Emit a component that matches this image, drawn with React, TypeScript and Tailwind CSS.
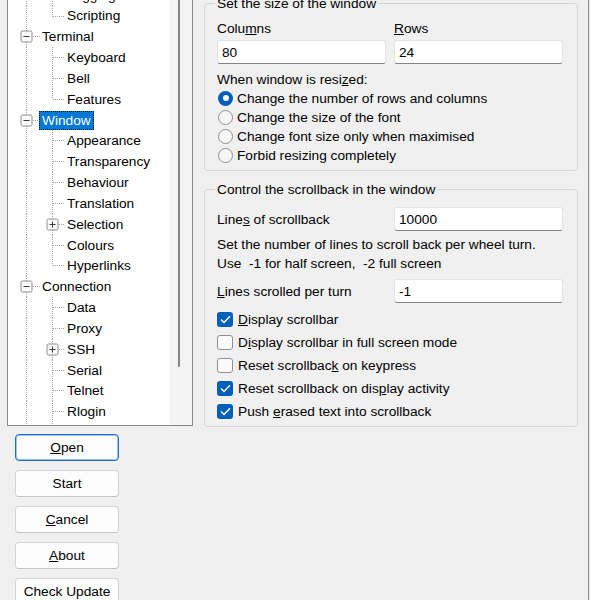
import React from 'react';

type TreeRow = {
  label: string;
  level: 0 | 1;
  box?: '+' | '-';
  v1?: 'full' | 'top';
  selected?: boolean;
};

const rows: TreeRow[] = [
  { label: 'Logging', level: 1, v1: 'full' },
  { label: 'Scripting', level: 1, v1: 'top' },
  { label: 'Terminal', level: 0, box: '-' },
  { label: 'Keyboard', level: 1, v1: 'full' },
  { label: 'Bell', level: 1, v1: 'full' },
  { label: 'Features', level: 1, v1: 'top' },
  { label: 'Window', level: 0, box: '-', selected: true },
  { label: 'Appearance', level: 1, v1: 'full' },
  { label: 'Transparency', level: 1, v1: 'full' },
  { label: 'Behaviour', level: 1, v1: 'full' },
  { label: 'Translation', level: 1, v1: 'full' },
  { label: 'Selection', level: 1, v1: 'full', box: '+' },
  { label: 'Colours', level: 1, v1: 'full' },
  { label: 'Hyperlinks', level: 1, v1: 'top' },
  { label: 'Connection', level: 0, box: '-' },
  { label: 'Data', level: 1, v1: 'full' },
  { label: 'Proxy', level: 1, v1: 'full' },
  { label: 'SSH', level: 1, v1: 'full', box: '+' },
  { label: 'Serial', level: 1, v1: 'full' },
  { label: 'Telnet', level: 1, v1: 'full' },
  { label: 'Rlogin', level: 1, v1: 'full' },
];

const DOT = { stroke: '#a3a3a3', strokeWidth: 1, strokeDasharray: '1 1' };

// expander box drawn at centre cx
function Expander({ cx, sign }: { cx: number; sign: '+' | '-' }) {
  return (
    <g>
      <rect x={cx - 5.5} y={5} width={11} height={11} rx={1.5} fill="#fafafa" stroke="#8e8e8e" />
      <line x1={cx - 3} y1={10.5} x2={cx + 3} y2={10.5} stroke="#3a3a3a" />
      {sign === '+' && <line x1={cx} y1={7.5} x2={cx} y2={13.5} stroke="#3a3a3a" />}
    </g>
  );
}

function Guides({ row, last }: { row: TreeRow; last: boolean }) {
  const w = row.level === 0 ? 34 : 59;
  const h = last ? 25 : 21;
  return (
    <svg width={w} height={21} className="shrink-0 overflow-visible">
      <line x1={18.5} y1={0} x2={18.5} y2={h} {...DOT} />
      {row.level === 0 && (
        <>
          <line x1={25} y1={10.5} x2={32} y2={10.5} {...DOT} />
          {row.box && <Expander cx={18.5} sign={row.box} />}
        </>
      )}
      {row.level === 1 && (
        <>
          <line x1={44.5} y1={0} x2={44.5} y2={row.v1 === 'top' ? 10.5 : h} {...DOT} />
          <line x1={row.box ? 51 : 45} y1={10.5} x2={56} y2={10.5} {...DOT} />
          {row.box && <Expander cx={44.5} sign={row.box} />}
        </>
      )}
    </svg>
  );
}

function Tree() {
  return (
    <div className="shrink-0 ml-[7px] mt-[-16.26px] w-[186px] h-[442.26px] border border-[#8a8a8a] bg-white flex">
      <div className="w-[162px] overflow-hidden flex flex-col">
        {rows.map((r, i) => (
          <div key={r.label} className="h-[20.84px] shrink-0 flex items-center">
            <Guides row={r} last={i === rows.length - 1} />
            <span
              className={`-ml-[3px] px-[2px] h-[19px] leading-[17px] border whitespace-nowrap ${
                r.selected ? 'bg-[#0078d7] text-white border-dotted border-[#1b1b1b]' : 'border-transparent'
              }`}
            >
              {r.label}
            </span>
          </div>
        ))}
      </div>
      <div className="w-[22px] bg-[#f3f3f3]">
        <div className="ml-[8px] mt-[4px] w-[2px] h-[378px] rounded-full bg-[#858585]" />
      </div>
    </div>
  );
}

function Button({ children, primary }: { children: React.ReactNode; primary?: boolean }) {
  return (
    <div
      className={`w-[104px] h-[27px] shrink-0 rounded-[4px] bg-[#fdfdfd] flex items-center justify-center ${
        primary
          ? 'border border-[#1f6fc0] shadow-[inset_0_0_0_1px_#9cc1ea]'
          : 'border border-[#d3d3d3] border-b-[#c2c2c2]'
      }`}
    >
      {children}
    </div>
  );
}

function TextBox({ value, w = 'w-[169px]' }: { value: string; w?: string }) {
  return (
    <div className={`${w} h-[24px] bg-white border border-[#e3e3e3] border-b-[#848484] rounded-[3px] pl-[4px] flex items-center`}>
      {value}
    </div>
  );
}

function Radio({ checked, children }: { checked?: boolean; children: React.ReactNode }) {
  return (
    <div className="h-[19px] flex items-center">
      <span
        className={`ml-[1px] w-[15px] h-[15px] rounded-full flex items-center justify-center ${
          checked ? 'bg-[#005fb8]' : 'border border-[#8f8f8f] bg-[#f7f7f7]'
        }`}
      >
        {checked && <span className="w-[6px] h-[6px] rounded-full bg-white" />}
      </span>
      <span className="ml-[4px]">{children}</span>
    </div>
  );
}

function Check({ checked, children }: { checked?: boolean; children: React.ReactNode }) {
  return (
    <div className="h-[23px] flex items-center">
      <span
        className={`w-[16px] h-[15px] rounded-[3px] flex items-center justify-center ${
          checked ? 'bg-[#005fb8]' : 'border border-[#8f8f8f] bg-[#fbfbfb]'
        }`}
      >
        {checked && (
          <svg width="11" height="9" viewBox="0 0 11 9">
            <path d="M1 4.6 L4 7.5 L10 1.3" fill="none" stroke="white" strokeWidth="1.4" />
          </svg>
        )}
      </span>
      <span className="ml-[5px]">{children}</span>
    </div>
  );
}

export default function App() {
  return (
    <div className="w-[590px] h-[600px] overflow-hidden bg-[#f0f0f0] flex text-[13.7px] leading-[19px] text-black font-['Liberation_Sans',Arial,sans-serif]">
      <div className="w-[588px] flex">
        {/* left: category tree + buttons */}
        <div className="w-[204px] flex flex-col">
          <Tree />
          <div className="ml-[15px] mt-[8px] flex flex-col gap-[9px]">
            <Button primary><span><u>O</u>pen</span></Button>
            <Button>Start</Button>
            <Button><span><u>C</u>ancel</span></Button>
            <Button><span><u>A</u>bout</span></Button>
            <Button>Check Update</Button>
          </div>
        </div>

        {/* right: window settings */}
        <div className="mt-[-6.5px] flex flex-col">
          <fieldset className="w-[374px] border border-[#d6d6d6] rounded-[4px] pl-[12px] pb-[5.5px]">
            <legend className="-ml-[2px] px-[2px]">Set the size of the window</legend>
            <div className="mt-[6.5px] grid grid-cols-[169px_169px] gap-x-[8px]">
              <div>Colu<u>m</u>ns</div>
              <div><u>R</u>ows</div>
              <div className="mt-[2px]"><TextBox value="80" /></div>
              <div className="mt-[2px]"><TextBox value="24" /></div>
            </div>
            <div className="mt-[5.5px]">When window is resi<u>z</u>ed:</div>
            <Radio checked>Change the number of rows and columns</Radio>
            <Radio>Change the size of the font</Radio>
            <Radio>Change font size only when maximised</Radio>
            <Radio>Forbid resizing completely</Radio>
          </fieldset>

          <fieldset className="mt-[9px] w-[374px] border border-[#d6d6d6] rounded-[4px] pl-[12px] pb-[3.5px]">
            <legend className="-ml-[2px] px-[2px]">Control the scrollback in the window</legend>
            <div className="mt-[8px] flex items-center">
              <div className="w-[177px]">Line<u>s</u> of scrollback</div>
              <TextBox value="10000" />
            </div>
            <div className="mt-[3.5px] whitespace-pre">
              <div>Set the number of lines to scroll back per wheel turn.</div>
              <div>Use  -1 for half screen,  -2 full screen</div>
            </div>
            <div className="mt-[6.5px] flex items-center">
              <div className="w-[177px]"><u>L</u>ines scrolled per turn</div>
              <TextBox value="-1" />
            </div>
            <div className="mt-[4.5px]">
              <Check checked><u>D</u>isplay scrollbar</Check>
              <Check>D<u>i</u>splay scrollbar in full screen mode</Check>
              <Check>Reset scrollbac<u>k</u> on keypress</Check>
              <Check checked>Reset scrollback on dis<u>p</u>lay activity</Check>
              <Check checked>Push <u>e</u>rased text into scrollback</Check>
            </div>
          </fieldset>
        </div>
      </div>
      <div className="w-[1px] bg-[#8e8e8e]" />
      <div className="w-[1px] bg-[#e4e4e4]" />
    </div>
  );
}
